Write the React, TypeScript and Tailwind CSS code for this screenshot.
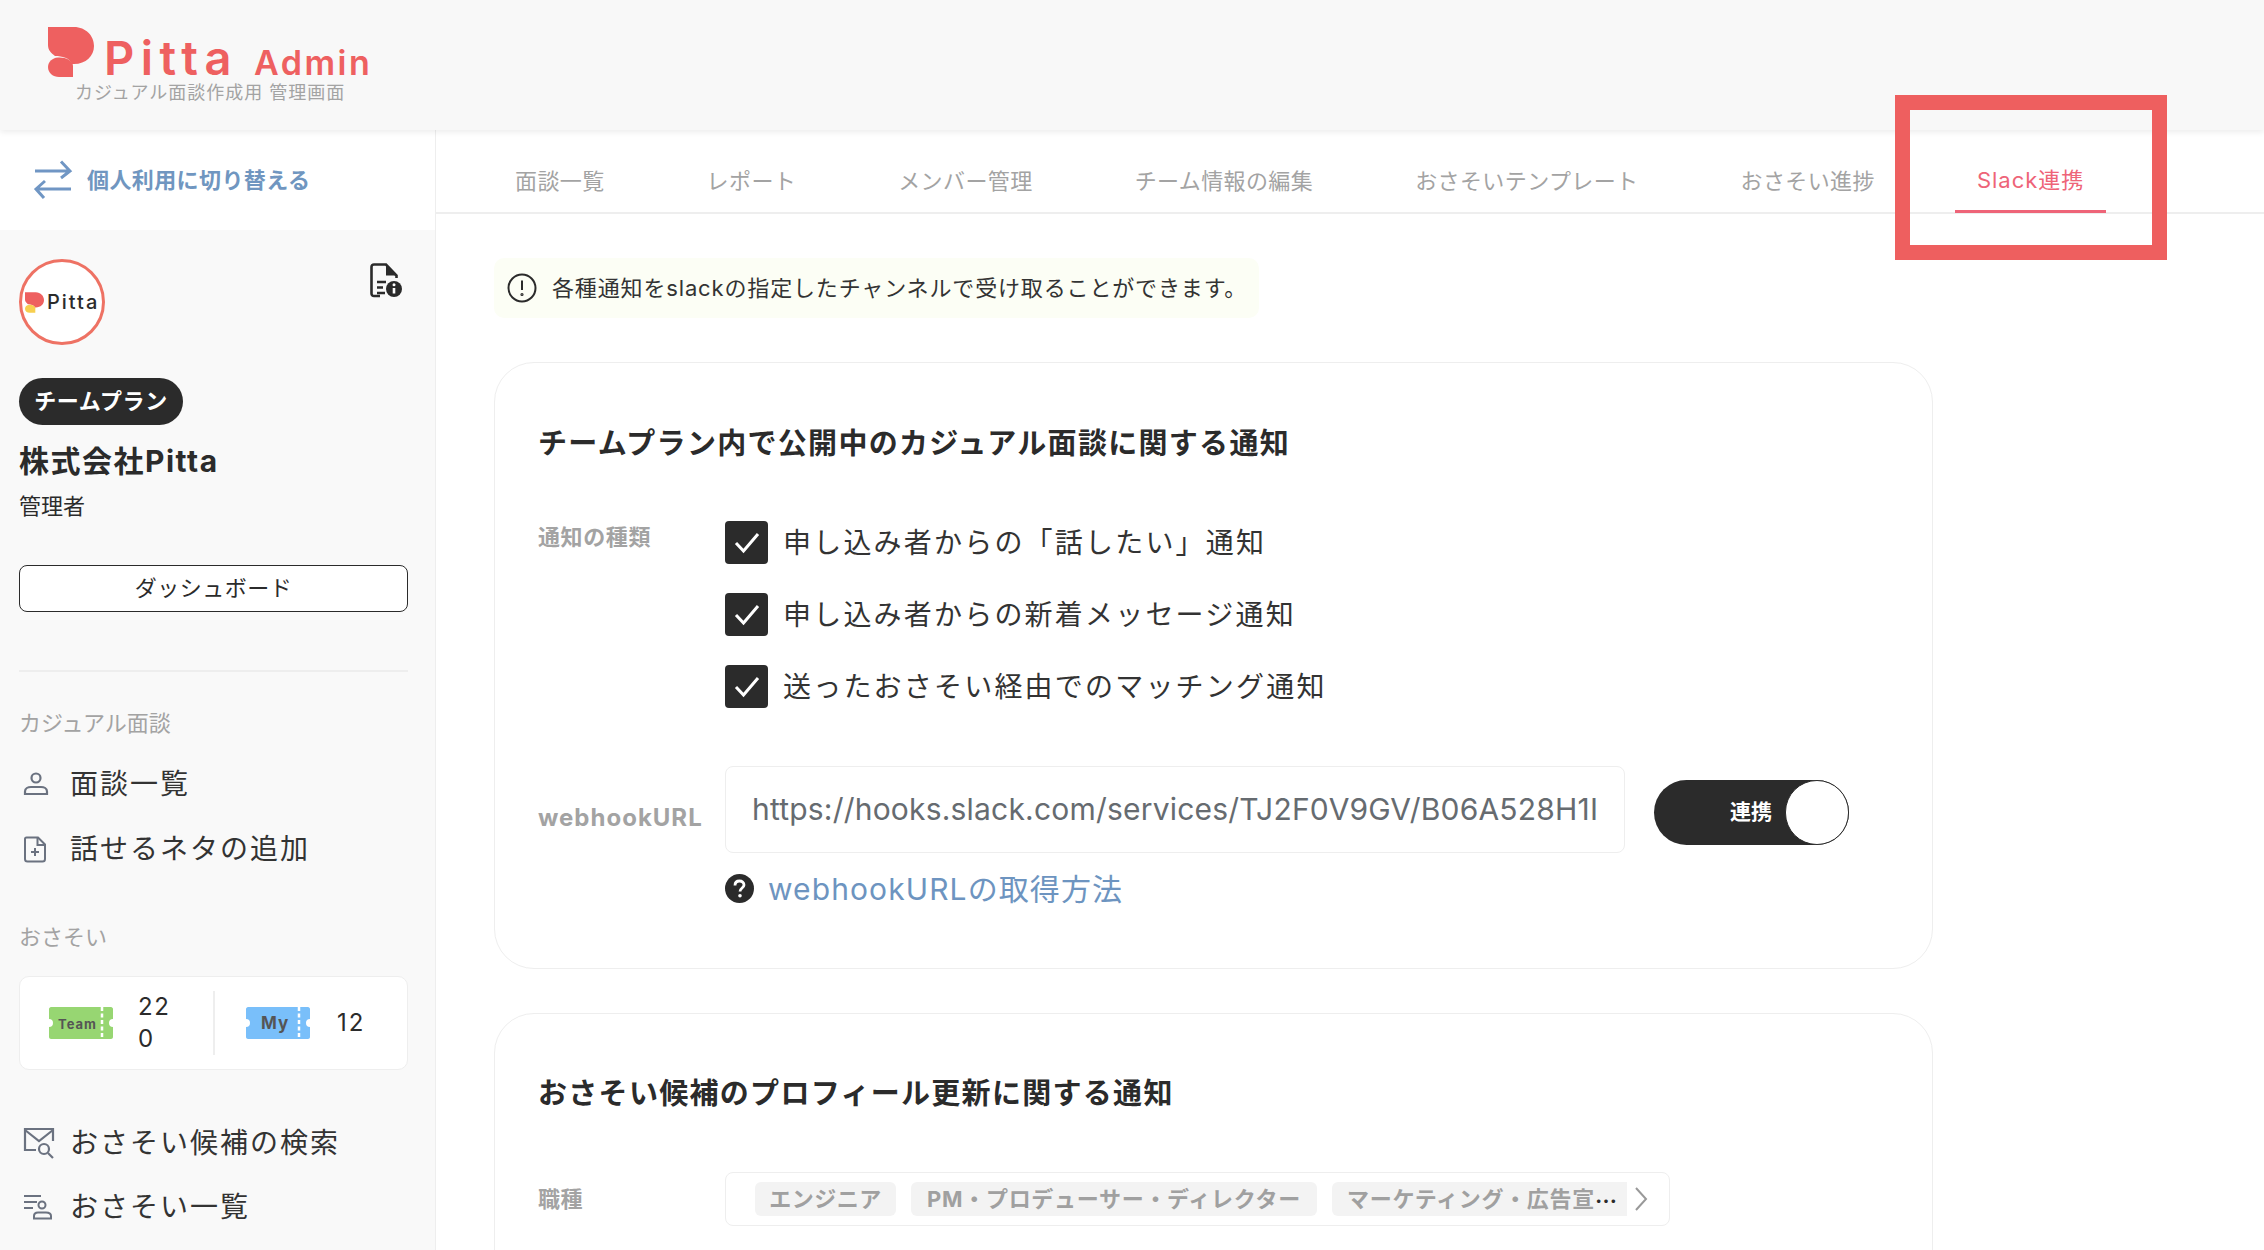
import React from "react";

const ink = "text-[#2b2b2b]";

function LogoMark({ w, h, bottom }: { w: number; h: number; bottom: string }) {
  return (
    <svg width={w} height={h} viewBox="0 0 46 50" className="shrink-0">
      <path d="M0 0H26C38 0 46 9 46 19C46 29 38 37 26 37H24C22 31 14 29 7 29C3 26 0 23 0 18Z" fill="#ee6060" />
      <path d="M25 50V39C25 33 17 30 10 30.500C4 31 0 35 0 40C0 46 5 50 11 50Z" fill={bottom} />
    </svg>
  );
}

function SwitchIcon() {
  return (
    <svg width="40" height="40" viewBox="0 0 40 40" fill="none" stroke="#7096c4" strokeWidth="3">
      <path d="M2 11H37M28 1.500L37 11L28 18" />
      <path d="M38 29H3M12 21L3 29L11 38" />
    </svg>
  );
}

function DocInfo() {
  return (
    <svg width="32" height="35" viewBox="0 0 32 35" fill="none">
      <path d="M10 33H4C2.500 33 1.500 32 1.500 30.500V4C1.500 2.500 2.500 1.500 4 1.500H16L26.500 12.500V15" stroke="#2b2b2b" strokeWidth="2.600" />
      <path d="M16 1.500V12.500H26.500Z" fill="#2b2b2b" />
      <path d="M7 19H16M7 24.500H13M7 30H15" stroke="#2b2b2b" strokeWidth="2.400" />
      <circle cx="24" cy="26" r="8" fill="#2b2b2b" />
      <path d="M24 25V30.500" stroke="#fff" strokeWidth="2.600" />
      <circle cx="24" cy="21.800" r="1.500" fill="#fff" />
    </svg>
  );
}

function PersonIcon() {
  return (
    <svg width="26" height="24" viewBox="0 0 26 24" fill="none" stroke="#6b7280" strokeWidth="2.200">
      <circle cx="13" cy="6" r="4.500" />
      <path d="M2 22V19.500C2 16.500 5 15 8 15H18C21 15 24 16.500 24 19.500V22Z" />
    </svg>
  );
}

function AddFileIcon() {
  return (
    <svg width="24" height="27" viewBox="0 0 24 27" fill="none" stroke="#6b7280" strokeWidth="2">
      <path d="M3.500 1.500H15L22 8.500V23C22 24.500 21 25.500 19.500 25.500H4.500C3 25.500 2 24.500 2 23V3C2 2 2.500 1.500 3.500 1.500Z" />
      <path d="M14.500 2V9H21.500M12 12V20M8 16H16" />
    </svg>
  );
}

function MailSearchIcon() {
  return (
    <svg width="32" height="32" viewBox="0 0 32 32" fill="none" stroke="#6b7280" strokeWidth="2.200">
      <path d="M13 23H2V2H30V14" />
      <path d="M2 3L16 14L30 3" />
      <circle cx="21" cy="22" r="5" />
      <path d="M25 26L30 31" />
    </svg>
  );
}

function ListPersonIcon() {
  return (
    <svg width="30" height="26" viewBox="0 0 30 26" fill="none" stroke="#6b7280" strokeWidth="2">
      <path d="M1 2H18M1 8H14M1 14H10" />
      <circle cx="19" cy="11" r="3.500" />
      <path d="M11 24.500V22C11 19.500 13 18.500 15 18.500H23C26 18.500 28 19.500 28 22V24.500Z" />
    </svg>
  );
}

function Ticket({ fill, label, x, size }: { fill: string; label: string; x: number; size: number }) {
  return (
    <svg width="64" height="32" viewBox="0 0 64 32" className="shrink-0">
      <path d="M2 0H62C63 0 64 1 64 2V12A4 4 0 0 0 64 20V30C64 31 63 32 62 32H2C1 32 0 31 0 30V20A4 4 0 0 0 0 12V2C0 1 1 0 2 0Z" fill={fill} />
      <path d="M53 0V32" stroke="#fff" strokeWidth="2.500" strokeDasharray="4 2.500" />
      <text x={x} y="21.500" fontSize={size} fontWeight="700" letterSpacing="1" fill="#555" fontFamily="Inter, sans-serif">
        {label}
      </text>
    </svg>
  );
}

function NavItem({ icon, children }: { icon: React.ReactNode; children: React.ReactNode }) {
  return (
    <div className="flex h-[48px] items-center">
      <div className="flex w-[51px] shrink-0 justify-start pl-[4px]">{icon}</div>
      <span className="text-[28px] leading-[40px] tracking-[2px] text-[#333333]">{children}</span>
    </div>
  );
}

function Sidebar() {
  return (
    <aside className="w-[436px] shrink-0 border-r border-[#eeeeee] bg-[#f9f9f9]">
      <div className="flex h-[100px] items-center gap-[14px] bg-white pl-[33px]">
        <SwitchIcon />
        <span className="text-[22px] font-bold tracking-[0.4px] text-[#7096c0]">個人利用に切り替える</span>
      </div>
      <div className="pl-[19px] pr-[27px] pt-[29px]">
        <div className="flex items-start justify-between pr-[6px]">
          <div className="flex h-[86px] w-[86px] items-center gap-[3px] overflow-hidden rounded-full border-[3px] border-[#ee7264] bg-white pl-[3px]">
            <LogoMark w={19} h={21} bottom="#f7cf50" />
            <span className="text-[20px] font-medium leading-none tracking-[2px] text-[#2b2b2b]">Pitta</span>
          </div>
          <div className="mt-[4px]">
            <DocInfo />
          </div>
        </div>
        <div className="mt-[33px] flex h-[47px] w-[164px] items-center justify-center rounded-full bg-[#2b2b2b] text-[22px] font-bold tracking-[0.6px] text-white">
          チームプラン
        </div>
        <div className={`mt-[16px] text-[30px] font-bold leading-[40px] tracking-[1.5px] ${ink}`}>株式会社Pitta</div>
        <div className={`mt-[9px] text-[22px] leading-[32px] ${ink}`}>管理者</div>
        <div className={`mt-[43px] flex h-[47px] items-center justify-center rounded-[8px] border border-[#2b2b2b] bg-white text-[22px] tracking-[0.5px] ${ink}`}>
          ダッシュボード
        </div>
        <div className="mt-[58px] h-[2px] bg-[#eeeeee]" />
        <div className="mt-[35px] text-[22px] leading-[32px] text-[#a3a3a3]">カジュアル面談</div>
        <div className="mt-[21px] flex flex-col gap-[17px]">
          <NavItem icon={<PersonIcon />}>面談一覧</NavItem>
          <NavItem icon={<AddFileIcon />}>話せるネタの追加</NavItem>
        </div>
        <div className="mt-[48px] text-[22px] leading-[32px] text-[#a3a3a3]">おさそい</div>
        <div className="mt-[23px] flex h-[94px] items-center rounded-[10px] border border-[#eeeeee] bg-white">
          <div className="flex w-[193px] items-center gap-[25px] pl-[29px]">
            <Ticket fill="#97d672" label="Team" x="9" size={13} />
            <span className={`w-[36px] break-all text-[24px] leading-[32px] tracking-[1.5px] ${ink}`}>220</span>
          </div>
          <div className="h-[64px] w-[2px] bg-[#eeeeee]" />
          <div className="flex items-center gap-[27px] pl-[31px]">
            <Ticket fill="#79bffa" label="My" x="15" size={17} />
            <span className={`text-[24px] leading-[32px] tracking-[2px] ${ink}`}>12</span>
          </div>
        </div>
        <div className="mt-[49px] flex flex-col gap-[16px]">
          <NavItem icon={<MailSearchIcon />}>おさそい候補の検索</NavItem>
          <NavItem icon={<ListPersonIcon />}>おさそい一覧</NavItem>
        </div>
      </div>
    </aside>
  );
}

function CheckRow({ children }: { children: React.ReactNode }) {
  return (
    <div className="flex h-[43px] items-center gap-[15px]">
      <div className="flex h-[43px] w-[43px] shrink-0 items-center justify-center rounded-[4px] bg-[#2b2b2b]">
        <svg width="26" height="22" viewBox="0 0 26 22" fill="none" stroke="#fff" strokeWidth="3">
          <path d="M2 11L9.500 19L24 2" />
        </svg>
      </div>
      <span className="text-[28px] leading-[40px] tracking-[2.2px] text-[#333333]">{children}</span>
    </div>
  );
}

const tabs = ["面談一覧", "レポート", "メンバー管理", "チーム情報の編集", "おさそいテンプレート", "おさそい進捗"];

function Main() {
  return (
    <main className="min-w-0 flex-1">
      <nav className="flex h-[84px] gap-[58px] border-b-2 border-[#eeeeee] pl-[57px]">
        {tabs.map((t) => (
          <div key={t} className="flex h-full items-center px-[22px] pt-[21px] text-[22px] tracking-[0.4px] text-[#a3a3a3]">
            {t}
          </div>
        ))}
        <div className="flex h-[83px] items-center border-b-[3px] border-[#ee6478] px-[22px] pt-[21px] text-[22px] tracking-[1px] text-[#ee6478]">
          Slack連携
        </div>
      </nav>
      <div className="pl-[58px]">
        <div className="mt-[44px] inline-flex h-[60px] items-center gap-[15px] rounded-[10px] bg-[#fcfef5] pl-[13px] pr-[12px]">
          <svg width="30" height="30" viewBox="0 0 30 30" fill="none" stroke="#2b2b2b" strokeWidth="2">
            <circle cx="15" cy="15" r="13.500" />
            <path d="M15 7.500V17" />
            <circle cx="15" cy="21.500" r="0.600" />
          </svg>
          <span className="text-[22px] tracking-[0.85px] text-[#333333]">各種通知をslackの指定したチャンネルで受け取ることができます。</span>
        </div>
        <section className="mt-[44px] h-[607px] w-[1439px] rounded-[40px] border border-[#eeeeee] pl-[43px] pt-[61px]">
          <h2 className={`text-[29px] font-bold leading-[40px] tracking-[1.3px] ${ink}`}>チームプラン内で公開中のカジュアル面談に関する通知</h2>
          <div className="mt-[57px] flex items-start">
            <div className="w-[187px] shrink-0 text-[22px] font-bold leading-[32px] tracking-[0.6px] text-[#a3a3a3]">通知の種類</div>
            <div className="flex flex-col gap-[29px]">
              <CheckRow>申し込み者からの「話したい」通知</CheckRow>
              <CheckRow>申し込み者からの新着メッセージ通知</CheckRow>
              <CheckRow>送ったおさそい経由でのマッチング通知</CheckRow>
            </div>
          </div>
          <div className="mt-[58px] flex items-start">
            <div className="w-[187px] shrink-0 pt-[36px] text-[24px] font-bold leading-[32px] tracking-[1px] text-[#a3a3a3]">webhookURL</div>
            <div>
              <div className="flex items-center gap-[29px]">
                <div className="flex h-[87px] w-[900px] items-center rounded-[8px] border border-[#eeeeee] px-[26px]">
                  <input
                    readOnly
                    value="https://hooks.slack.com/services/TJ2F0V9GV/B06A528H1IAAAAAAAAAA"
                    className="w-full bg-transparent text-[30px] tracking-[0.2px] text-[#666b70] outline-none"
                  />
                </div>
                <div className="mt-[5px] flex h-[65px] w-[195px] items-center justify-end rounded-full bg-[#2b2b2b]">
                  <span className="mr-[13px] text-[21px] font-bold text-white">連携</span>
                  <div className="h-[65px] w-[64px] rounded-full border border-[#2b2b2b] bg-white" />
                </div>
              </div>
              <div className="mt-[21px] flex h-[29px] items-center gap-[14px]">
                <svg width="29" height="29" viewBox="0 0 29 29" className="shrink-0">
                  <circle cx="14.500" cy="14.500" r="14.500" fill="#2b2b2b" />
                  <path d="M10 11.500C10 8.500 12 7 14.500 7C17 7 19 8.500 19 11C19 14 15 14 15 17.500" fill="none" stroke="#fff" strokeWidth="2.800" />
                  <circle cx="15" cy="21.800" r="1.800" fill="#fff" />
                </svg>
                <span className="text-[30px] leading-[40px] tracking-[1.1px] text-[#6d94c0]">webhookURLの取得方法</span>
              </div>
            </div>
          </div>
        </section>
        <section className="mt-[44px] h-[400px] w-[1439px] rounded-[40px] border border-[#eeeeee] pl-[43px] pt-[60px]">
          <h2 className={`text-[29px] font-bold leading-[40px] tracking-[1.3px] ${ink}`}>おさそい候補のプロフィール更新に関する通知</h2>
          <div className="mt-[58px] flex items-center">
            <div className="w-[187px] shrink-0 text-[22px] font-bold leading-[32px] tracking-[0.6px] text-[#a3a3a3]">職種</div>
            <div className="flex h-[54px] w-[945px] items-center rounded-[8px] border border-[#eeeeee] pl-[29px]">
              <div className="flex gap-[15px]">
                <span className="flex h-[34px] w-[141px] shrink-0 items-center justify-center whitespace-nowrap rounded-[6px] bg-[#f3f3f3] text-[22px] font-bold tracking-[0.5px] text-[#a0a0a0]">
                  エンジニア
                </span>
                <span className="flex h-[34px] w-[406px] shrink-0 items-center justify-center whitespace-nowrap rounded-[6px] bg-[#f3f3f3] text-[22px] font-bold tracking-[0.7px] text-[#a0a0a0]">
                  PM・プロデューサー・ディレクター
                </span>
                <span className="flex h-[34px] w-[295px] items-center overflow-hidden whitespace-nowrap rounded-l-[6px] bg-[#f3f3f3] pl-[15px] text-[22px] font-bold tracking-[0.7px] text-[#a0a0a0]">
                  マーケティング・広告宣<span className="font-['Noto_Sans_CJK_JP',sans-serif] text-[#2b2b2b]">…</span>
                </span>
              </div>
              <svg width="14" height="24" viewBox="0 0 14 24" fill="none" stroke="#999" strokeWidth="2" className="ml-[7px]">
                <path d="M2 1L12 12L2 23" />
              </svg>
            </div>
          </div>
        </section>
      </div>
    </main>
  );
}

export default function App() {
  return (
    <div className="relative h-[1250px] w-[2264px] overflow-hidden bg-white font-['Inter','Noto_Sans_CJK_JP',sans-serif]">
      <header className="relative z-10 h-[130px] bg-[#f8f8f8] pl-[48px] pt-[27px] shadow-[0_2px_6px_rgba(0,0,0,0.08)]">
        <div className="inline-flex flex-col items-center">
          <div className="flex h-[50px] items-end">
            <LogoMark w={46} h={50} bottom="#ee6060" />
            <span className="mb-[-4px] ml-[10px] text-[47px] font-semibold leading-[46px] tracking-[6.5px] text-[#ee6060]">Pitta</span>
            <span className="mb-[-3px] ml-[16px] text-[34px] font-semibold leading-[34px] tracking-[2.5px] text-[#ee6060]">Admin</span>
          </div>
          <div className="mt-[4px] text-[18px] leading-[24px] tracking-[1px] text-[#a3a3a3]">カジュアル面談作成用 管理画面</div>
        </div>
      </header>
      <div className="flex h-[1120px]">
        <Sidebar />
        <Main />
      </div>
      <div className="absolute left-[1895px] top-[95px] z-20 h-[165px] w-[272px] border-[15px] border-[#ee5f5f]" />
    </div>
  );
}
